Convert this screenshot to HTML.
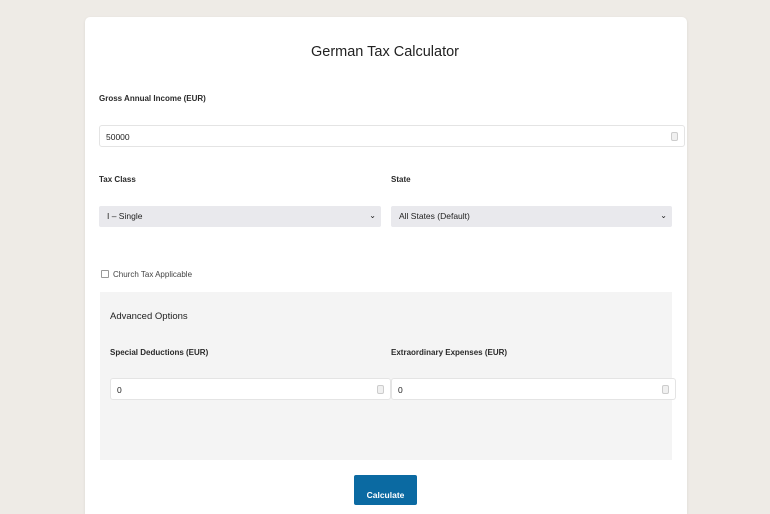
<!DOCTYPE html>
<html><head><style>
*{margin:0;padding:0;box-sizing:border-box}
html,body{width:770px;height:514px;overflow:hidden}
body{background:#eeebe6;font-family:"Liberation Sans",sans-serif;color:#222;position:relative}
.card{position:absolute;left:85px;top:17px;width:602px;height:497px;background:#fff;border-radius:5px 5px 0 0;box-shadow:0 1px 3px rgba(0,0,0,.08)}
.a{position:absolute}
.lbl{font-size:8px;color:#2a2a2a;font-weight:600}
.inp{position:absolute;height:22px;background:#fff;border:1px solid #e4e4e4;border-radius:3px;font-size:8.5px;padding:6px 6px}
.sel{position:absolute;height:21px;background:#e9e9ed;border-radius:2px;font-size:8.5px;padding:5px 8px}
.spin{position:absolute;right:6px;top:6px;width:7px;height:9px;border:1px solid #ccc;border-radius:2px;background:#f0f0f0}
.chev{position:absolute;right:5px;top:5px;font-size:8px}
</style></head><body>
<div class="card"></div>
<div class="a" style="left:0;width:770px;top:44px;text-align:center;font-size:14.5px;">German Tax Calculator</div>
<div class="a lbl" style="left:99px;top:94px">Gross Annual Income (EUR)</div>
<div class="inp" style="left:99px;top:125px;width:586px">50000<div class="spin"></div></div>
<div class="a lbl" style="left:99px;top:175px">Tax Class</div>
<div class="a lbl" style="left:391px;top:175px">State</div>
<div class="sel" style="left:99px;top:206px;width:282px">I – Single<span class="chev">⌄</span></div>
<div class="sel" style="left:391px;top:206px;width:281px">All States (Default)<span class="chev">⌄</span></div>
<div class="a" style="left:101px;top:270px;width:8px;height:8px;border:1px solid #999;border-radius:1px"></div>
<div class="a" style="left:113px;top:270px;font-size:8px;color:#444">Church Tax Applicable</div>
<div class="a" style="left:100px;top:292px;width:572px;height:168px;background:#f4f4f4"></div>
<div class="a" style="left:110px;top:311px;font-size:9.5px">Advanced Options</div>
<div class="a lbl" style="left:110px;top:348px">Special Deductions (EUR)</div>
<div class="a lbl" style="left:391px;top:348px">Extraordinary Expenses (EUR)</div>
<div class="inp" style="left:110px;top:378px;width:281px">0<div class="spin"></div></div>
<div class="inp" style="left:391px;top:378px;width:285px">0<div class="spin"></div></div>
<div class="a" style="left:354px;top:475px;width:63px;height:30px;background:#0b6aa2;border-radius:2px;color:#fff;font-size:8.5px;font-weight:bold;text-align:center;padding-top:15px">Calculate</div>
</body></html>
